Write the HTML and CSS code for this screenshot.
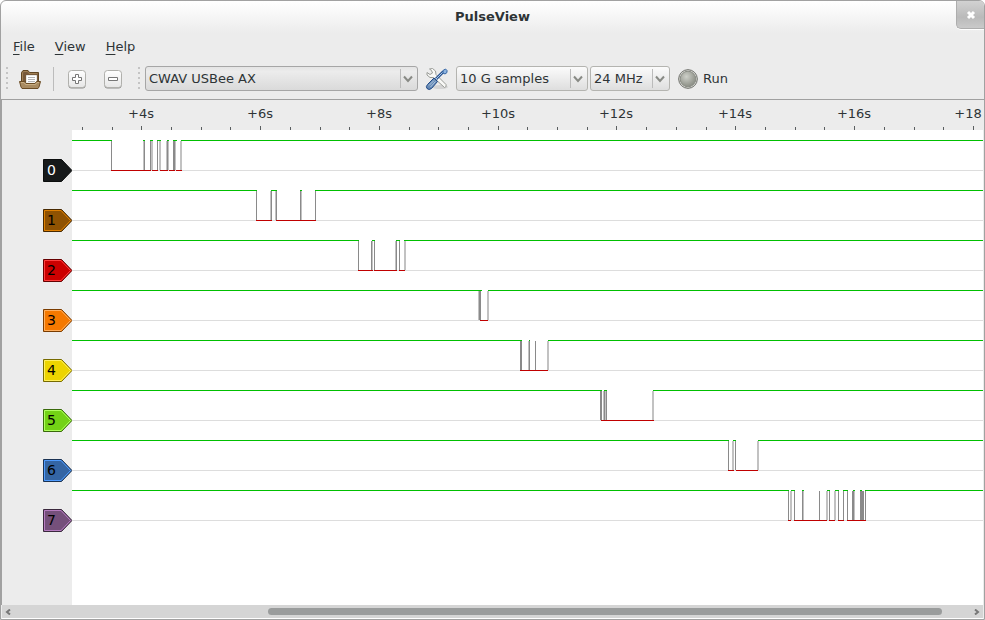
FILE: index.html
```html
<!DOCTYPE html>
<html lang="en">
<head>
<meta charset="utf-8">
<title>PulseView</title>
<link rel="stylesheet" href="styles.css">
</head>
<body>
<div class="window">
  <header class="titlebar">
    <h1>PulseView</h1>
    <button class="close" aria-label="Close"><svg width="10" height="10"><path d="M2 2L8 8M8 2L2 8"/></svg></button>
  </header>
  <nav class="menu">
    <a href="#"><u>F</u>ile</a>
    <a href="#"><u>V</u>iew</a>
    <a href="#"><u>H</u>elp</a>
  </nav>
  <div class="toolbar">
    <span class="grip"></span>
    <button class="tool open" aria-label="Open">
      <svg width="24" height="22" viewBox="0 0 24 22">
        <path d="M3.500 14V4.500L5 2.500H10L11.500 4.500H20.500V14Z" fill="#77593a" stroke="#604522"/>
        <path d="M4.500 13V5L5.500 3.500H9.500L11 5.500H19.500" fill="none" stroke="#a08054"/>
        <path d="M8.500 15V7.500H18.500V15Z" fill="#fff" stroke="#e8e8e4"/>
        <path d="M10 9.500H17M10 11.500H17M10 13.500H17" stroke="#b4b4b4"/>
        <path d="M1.500 13.500H6.500L8 15.500H17L18.500 13.500H22.500L21 19L20 20.500H4L3 19Z" fill="#a98b61" stroke="#6b4c25"/>
        <path d="M3 14.500H6L7.500 16.500H17.500L19 14.500H21" fill="none" stroke="#c9ae83"/>
      </svg>
    </button>
    <span class="rule"></span>
    <button class="tool zoom" aria-label="Zoom in"><svg width="20" height="20" viewBox="0 0 20 20"><use href="#key"/><path d="M8.500 5.500H11.500V8.500H14.500V11.500H11.500V14.500H8.500V11.500H5.500V8.500H8.500Z" fill="#fff" stroke="#777"/></svg></button>
    <button class="tool zoom" aria-label="Zoom out"><svg width="20" height="20" viewBox="0 0 20 20"><use href="#key"/><path d="M5.500 8.500H14.500V11.500H5.500Z" fill="#fff" stroke="#777"/></svg></button>
    <span class="grip second"></span>
    <span class="combo device"><select aria-label="Device"><option>CWAV USBee AX</option></select><svg class="chevron" width="10" height="8"><path d="M1 1.500L5 6L9 1.500"/></svg></span>
    <button class="tool config" aria-label="Configure device">
      <svg width="24" height="24" viewBox="0 0 24 24">
        <ellipse cx="15" cy="20" rx="8" ry="2" fill="#d4d4d4"/>
        <path d="M4.500 2L7.500 1.500L10.500 4L11 7.500L21 17.500Q22 20 19.500 20.500L8.500 10.500L5 10.500L2 8V5.500L5 7.500L7.500 6L6.500 3.500Z" fill="#f8f8f6" stroke="#9a9c97"/>
        <path d="M11 12L18.500 4.500" stroke="#2f5894" stroke-width="3"/>
        <path d="M11 12L18 5" stroke="#a9c7e8" stroke-width="1"/>
        <path d="M18 3.500L20.500 2L22 3.500V5.500L20 7L18 6Z" fill="#8eb4df" stroke="#3465a4"/>
        <path d="M9 11L12.500 14.500L6.500 21.500Q4 23.500 2 21.500Q.5 19.500 2.500 17.500Z" fill="#688bb5" stroke="#204a87"/>
        <path d="M4 18.500L9 13.500M5.500 20L10.500 14.500" stroke="#afc8e3"/>
      </svg>
    </button>
    <span class="combo samples"><select aria-label="Sample count"><option>10 G samples</option></select><svg class="chevron" width="10" height="8"><path d="M1 1.500L5 6L9 1.500"/></svg></span>
    <span class="combo rate"><select aria-label="Sample rate"><option>24 MHz</option></select><svg class="chevron" width="10" height="8"><path d="M1 1.500L5 6L9 1.500"/></svg></span>
    <button class="run">
      <svg width="20" height="20" viewBox="0 0 20 20">
        <defs>
          <radialGradient id="lamp" cx=".4" cy=".35" r=".65"><stop offset="0" stop-color="#ced0c9"/><stop offset="1" stop-color="#8b8e85"/></radialGradient>
          <linearGradient id="face" x2="0" y2="1"><stop offset="0" stop-color="#fff"/><stop offset="1" stop-color="#e6e6e6"/></linearGradient>
          <g id="key"><rect x="1.500" y="2" width="17" height="17.500" rx="3" fill="#8c8c8c"/><rect x="1.500" y="1.500" width="17" height="17" rx="3" fill="url(#face)" stroke="#b0b0ac"/></g>
        </defs>
        <circle cx="10" cy="10" r="9.300" fill="#e8e8e4" stroke="#666862"/><circle cx="10" cy="10" r="7.800" fill="url(#lamp)" stroke="#8a8d85"/>
      </svg>
      Run
    </button>
  </div>
  <main class="view">
    <div class="ruler">
      <svg>
        <g text-anchor="middle">
          <text x="69" y="18">+4s</text><text x="188" y="18">+6s</text><text x="307" y="18">+8s</text><text x="426" y="18">+10s</text><text x="544" y="18">+12s</text><text x="663" y="18">+14s</text><text x="782" y="18">+16s</text><text x="896" y="18">+18</text>
        </g>
        <path class="major" d="M69.500 26v4M188.500 26v4M307.500 26v4M426.500 26v4M544.500 26v4M663.500 26v4M782.500 26v4M901.500 26v4"/>
        <path class="minor" d="M10.500 27v3M40.500 27v3M99.500 27v3M129.500 27v3M158.500 27v3M218.500 27v3M248.500 27v3M277.500 27v3M337.500 27v3M366.500 27v3M396.500 27v3M455.500 27v3M485.500 27v3M515.500 27v3M574.500 27v3M604.500 27v3M634.500 27v3M693.500 27v3M723.500 27v3M752.500 27v3M812.500 27v3M842.500 27v3M871.500 27v3"/>
      </svg>
    </div>
    <div class="traces">
      <div class="trace c0"><div class="head"><svg class="tag" width="30" height="23"><path class="outer" d="M.5 .5H18.500L29 11.500L18.500 22.500H.5Z"/><path class="inner" d="M1.500 21.500V1.500H18L27.500 11.500L18 21.500Z"/><text x="4" y="16">0</text></svg></div>
        <svg class="wave"><path class="base" d="M0 40.500H2000"/><path class="dark" d="M39.500 11v29M72.500 11v29M78.500 11v29M85.500 11v29M95.500 11v29M101.500 11v29M102.500 11v29"/><path class="light" d="M71.500 11v29M80.500 11v29M79.500 11v29M88.500 11v29M87.500 11v29M94.500 11v29M96.500 11v29M103.500 11v29M108.500 11v29M109.500 11v29"/><path class="high" d="M0 10.500H40M71 10.500H73M78 10.500H81M85 10.500H89M95 10.500H97M101 10.500H105M109 10.500H2000"/><path class="low" d="M39 40.500H79M80 40.500H86M88 40.500H96M97 40.500H103M104 40.500H110"/></svg></div>
      <div class="trace c1"><div class="head"><svg class="tag" width="30" height="23"><path class="outer" d="M.5 .5H18.500L29 11.500L18.500 22.500H.5Z"/><path class="inner" d="M1.500 21.500V1.500H18L27.500 11.500L18 21.500Z"/><text x="4" y="16">1</text></svg></div>
        <svg class="wave"><path class="base" d="M0 40.500H2000"/><path class="dark" d="M184.500 11v29M199.500 11v29M204.500 11v29M228.500 11v29M243.500 11v29"/><path class="light" d="M198.500 11v29M203.500 11v29M229.500 11v29"/><path class="high" d="M0 10.500H185M199 10.500H205M228 10.500H230M243 10.500H2000"/><path class="low" d="M184 40.500H200M204 40.500H244"/></svg></div>
      <div class="trace c2"><div class="head"><svg class="tag" width="30" height="23"><path class="outer" d="M.5 .5H18.500L29 11.500L18.500 22.500H.5Z"/><path class="inner" d="M1.500 21.500V1.500H18L27.500 11.500L18 21.500Z"/><text x="4" y="16">2</text></svg></div>
        <svg class="wave"><path class="base" d="M0 40.500H2000"/><path class="dark" d="M286.500 11v29M299.500 11v29M302.500 11v29M324.500 11v29M327.500 11v29"/><path class="light" d="M300.500 11v29M323.500 11v29M332.500 11v29M333.500 11v29"/><path class="high" d="M0 10.500H287M300 10.500H303M324 10.500H328M332 10.500H2000"/><path class="low" d="M286 40.500H301M302 40.500H325M327 40.500H333"/></svg></div>
      <div class="trace c3"><div class="head"><svg class="tag" width="30" height="23"><path class="outer" d="M.5 .5H18.500L29 11.500L18.500 22.500H.5Z"/><path class="inner" d="M1.500 21.500V1.500H18L27.500 11.500L18 21.500Z"/><text x="4" y="16">3</text></svg></div>
        <svg class="wave"><path class="base" d="M0 40.500H2000"/><path class="dark" d="M407.500 11v29M408.500 11v29"/><path class="light" d="M406.500 11v29M415.500 11v29M416.500 11v29"/><path class="high" d="M0 10.500H410M416 10.500H2000"/><path class="low" d="M408 40.500H416"/></svg></div>
      <div class="trace c4"><div class="head"><svg class="tag" width="30" height="23"><path class="outer" d="M.5 .5H18.500L29 11.500L18.500 22.500H.5Z"/><path class="inner" d="M1.500 21.500V1.500H18L27.500 11.500L18 21.500Z"/><text x="4" y="16">4</text></svg></div>
        <svg class="wave"><path class="base" d="M0 40.500H2000"/><path class="dark" d="M448.500 11v29M449.500 11v29M457.500 11v29M463.500 11v29"/><path class="light" d="M456.500 11v29M475.500 11v29M476.500 11v29"/><path class="high" d="M0 10.500H450M457 10.500H458M476 10.500H2000"/><path class="low" d="M448 40.500H476"/></svg></div>
      <div class="trace c5"><div class="head"><svg class="tag" width="30" height="23"><path class="outer" d="M.5 .5H18.500L29 11.500L18.500 22.500H.5Z"/><path class="inner" d="M1.500 21.500V1.500H18L27.500 11.500L18 21.500Z"/><text x="4" y="16">5</text></svg></div>
        <svg class="wave"><path class="base" d="M0 40.500H2000"/><path class="dark" d="M528.500 11v29M529.500 11v29M532.500 11v29M534.500 11v29"/><path class="light" d="M531.500 11v29M533.500 11v29M580.500 11v29M581.500 11v29"/><path class="high" d="M0 10.500H530M532 10.500H535M581 10.500H2000"/><path class="low" d="M529 40.500H582"/></svg></div>
      <div class="trace c6"><div class="head"><svg class="tag" width="30" height="23"><path class="outer" d="M.5 .5H18.500L29 11.500L18.500 22.500H.5Z"/><path class="inner" d="M1.500 21.500V1.500H18L27.500 11.500L18 21.500Z"/><text x="4" y="16">6</text></svg></div>
        <svg class="wave"><path class="base" d="M0 40.500H2000"/><path class="dark" d="M656.500 11v29M663.500 11v29"/><path class="light" d="M660.500 11v29M661.500 11v29M685.500 11v29M686.500 11v29"/><path class="high" d="M0 10.500H657M661 10.500H664M686 10.500H2000"/><path class="low" d="M656 40.500H662M664 40.500H686"/></svg></div>
      <div class="trace c7"><div class="head"><svg class="tag" width="30" height="23"><path class="outer" d="M.5 .5H18.500L29 11.500L18.500 22.500H.5Z"/><path class="inner" d="M1.500 21.500V1.500H18L27.500 11.500L18 21.500Z"/><text x="4" y="16">7</text></svg></div>
        <svg class="wave"><path class="base" d="M0 40.500H2000"/><path class="dark" d="M716.500 11v29M722.500 11v29M730.500 11v29M747.500 11v29M757.500 11v29M766.500 11v29M771.500 11v29M775.500 11v29M780.500 11v29M781.500 11v29M788.500 11v29M789.500 11v29M790.500 11v29M791.500 11v29M793.500 11v29"/><path class="light" d="M718.500 11v29M719.500 11v29M731.500 11v29M754.500 11v29M755.500 11v29M762.500 11v29M763.500 11v29M782.500 11v29"/><path class="high" d="M0 10.500H717M719 10.500H723M730 10.500H732M755 10.500H758M763 10.500H767M771 10.500H776M781 10.500H783M788 10.500H790M793 10.500H2000"/><path class="low" d="M716 40.500H719M722 40.500H755M757 40.500H763M766 40.500H772M775 40.500H794"/></svg></div>
    </div>
  </main>
  <div class="scrollbar">
    <button aria-label="Scroll left"><svg width="6" height="6"><path d="M5 .5L2 3L5 5.500"/></svg></button>
    <div class="track"><div class="thumb"></div></div>
    <button aria-label="Scroll right"><svg width="6" height="6"><path d="M1 .5L4 3L1 5.500"/></svg></button>
  </div>
</div>
</body>
</html>
```
FILE: styles.css
```css
* { box-sizing: border-box; }
body { margin: 0; background: #fff; font: 13px/18px "DejaVu Sans", sans-serif; color: #2e3436; }
svg { display: block; }
button, select { font: inherit; color: inherit; }
button { border: 0; padding: 0; background: none; }
.window {
  min-height: 100vh; display: flex; flex-direction: column;
  border: 1px solid #a1a1a1; border-radius: 6px 6px 0 0;
  background: linear-gradient(#fff, #ececec 32px);
  overflow: hidden;
}
.titlebar { height: 32px; display: grid; grid-template-columns: 1fr auto; }
h1 { margin: 0; grid-column: 1 / 3; grid-row: 1; text-align: center; font-size: 13px; line-height: 32px; }
.close {
  grid-column: 2; grid-row: 1; width: 28px; height: 28px; display: grid; place-items: center;
  background: linear-gradient(#d2d2d2, #bababa 60%, #cacaca); border: solid #adadad; border-width: 0 0 1px 1px;
  border-radius: 0 0 0 5px; box-shadow: 0 1px #fff;
}
.close path { stroke: #fff; stroke-width: 3; }
.menu { display: flex; gap: 20px; padding: 5px 12px 0; height: 27px; }
.menu a { color: inherit; text-decoration: none; }
.menu u { text-underline-offset: 3px; text-decoration-thickness: 1px; }
.toolbar { height: 40px; display: flex; align-items: center; padding: 0 5px 2px; border-bottom: 1px solid #a0a0a0; }
.grip { width: 2px; height: 24px; background: repeating-linear-gradient(#c4c4c4 0 2px, transparent 2px 5px); }
.open { margin-left: 10px; }
.rule { width: 1px; height: 24px; background: #bcbcbc; margin: 0 13px 0 11px; }
.zoom + .zoom { margin-left: 16px; }
.second { margin-left: 15px; margin-right: 5px; }
.combo { position: relative; height: 25px; }
.combo select {
  appearance: none; display: block; width: 100%; height: 25px; padding: 0 20px 0 3px;
  border: 1px solid #b4b4b0; border-radius: 3px; background: linear-gradient(#fbfbfb, #dedede);
}
.device { width: 273px; }
.device select { border-color: #a6a6a6; background: linear-gradient(#e4e4e4, #ececec 20%, #dadada); }
.samples { width: 132px; }
.rate { width: 80px; margin-left: 2px; }
.combo::after { content: ""; position: absolute; right: 17px; top: 3px; bottom: 3px; width: 1px; background: #bbb; }
.chevron { position: absolute; right: 5px; top: 9px; pointer-events: none; }
.chevron path { fill: none; stroke: #888a85; stroke-width: 2; }
.config { margin: 0 7px; }
.run { display: flex; align-items: center; gap: 5px; margin-left: 8px; }
.view { flex: 1; display: flex; flex-direction: column; border-left: 1px solid #a1a1a1; margin-right: 1px; background: linear-gradient(90deg, #ececec 70px, #fff 70px); }
.ruler { height: 30px; padding-left: 70px; background: #ececec; }
.ruler svg { width: 100%; height: 30px; }
.ruler text { fill: #2e3436; }
.major, .minor { stroke: #5a5e60; }
.trace { display: grid; grid-template-columns: 70px 1fr; height: 50px; }
.head { padding: 29px 0 0 41px; }
.head svg { width: 29px; }
.wave { width: 100%; height: 50px; shape-rendering: crispEdges; }
.base { stroke: #ddd; }
.dark { stroke: #8a8a8a; }
.light { stroke: #c2c2c2; }
.high { stroke: #00c000; }
.low { stroke: #c00000; }
.outer { fill: var(--fill); stroke: var(--edge); }
.inner { fill: none; stroke: var(--shine); }
.tag text { fill: #000; font-size: 14px; }
.c0 { --fill: #16191a; --edge: #0b0d0d; --shine: #16191a; }
.c0 .tag text { fill: #fff; }
.c1 { --fill: #8f5202; --edge: #472901; --shine: #df8002; }
.c2 { --fill: #cc0000; --edge: #660000; --shine: #ff4040; }
.c3 { --fill: #f57900; --edge: #7a3c00; --shine: #ffb060; }
.c4 { --fill: #edd400; --edge: #766a00; --shine: #fff060; }
.c5 { --fill: #73d216; --edge: #39690b; --shine: #b0ff60; }
.c6 { --fill: #3465a4; --edge: #1a3252; --shine: #4f9cff; }
.c7 { --fill: #75507b; --edge: #3a283d; --shine: #b67cc0; }
.scrollbar { height: 14px; display: flex; align-items: center; margin: 0 1px; border-bottom: 1px solid #fff; background: #d5d5d5; }
.scrollbar button { width: 12px; display: grid; place-items: center; }
.scrollbar path { fill: none; stroke: #777; stroke-width: 2; }
.track { flex: 1; }
.thumb { margin-left: 26.500%; width: 70.500%; height: 7px; border-radius: 4px; background: #9a9c9c; }
```
